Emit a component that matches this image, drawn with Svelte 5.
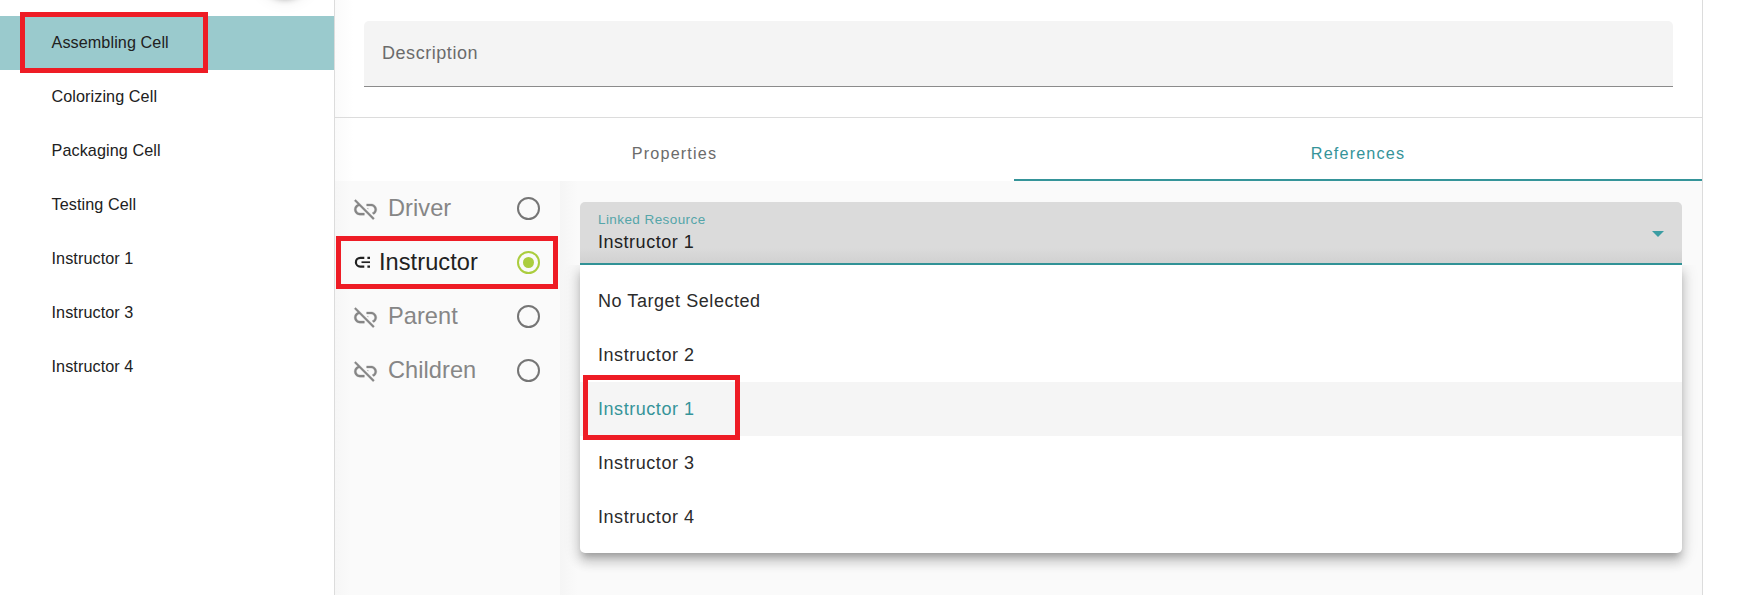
<script>
  const resources = ['Assembling Cell', 'Colorizing Cell', 'Packaging Cell', 'Testing Cell', 'Instructor 1', 'Instructor 3', 'Instructor 4'];
  const roles = ['Driver', 'Instructor', 'Parent', 'Children'];
  const options = ['No Target Selected', 'Instructor 2', 'Instructor 1', 'Instructor 3', 'Instructor 4'];
  let resource = $state('Assembling Cell');
  let role = $state('Instructor');
  let target = $state('Instructor 1');
</script>

<div class="app">
  <aside class="sidebar">
    <i class="fab"></i>
    {#each resources as r}
      <button class="cell" class:active={r === resource} onclick={() => (resource = r)}>{r}</button>
    {/each}
    <i class="mark mark-cell"></i>
  </aside>

  <main>
    <section class="head">
      <div class="description">Description</div>
    </section>
    <nav>
      <div class="tab">Properties</div>
      <div class="tab current">References</div>
    </nav>
    <div class="body">
      <div class="roles">
        {#each roles as r}
          <button class="role" class:on={r === role} onclick={() => (role = r)}>
            {#if r === role}
              <svg class="link" width="18" height="18" viewBox="0 0 18 18">
                <path d="M11.3 4.8H7.3a4.4 4.4 0 0 0 0 8.8h4M14.4 4.8H17M14.4 13.6H17" fill="none" stroke="currentColor" stroke-width="2.2" />
                <path d="M8.5 9.2H17" fill="none" stroke="currentColor" stroke-width="1.7" />
              </svg>
            {:else}
              <svg class="off" width="27" height="27" viewBox="0 0 24 24">
                <path fill="currentColor" d="M17 7h-4v1.9h4c1.71 0 3.1 1.39 3.1 3.1 0 1.43-.98 2.63-2.31 2.98l1.46 1.46C20.88 15.61 22 13.95 22 12c0-2.76-2.24-5-5-5zm-2.6 4h-.7l.7.7zM2 4.27l3.11 3.11C3.29 8.12 2 9.91 2 12c0 2.76 2.24 5 5 5h4v-1.9H7c-1.71 0-3.1-1.39-3.1-3.1 0-1.59 1.21-2.9 2.76-3.07L18.74 21 20 19.74 3.27 3 2 4.27z" stroke="currentColor" stroke-width=".25" />
              </svg>
            {/if}
            <span>{r}</span>
            <i class="radio"></i>
          </button>
        {/each}
        <i class="mark mark-role"></i>
      </div>
      <div class="content">
        <div class="select">
          <div>
            <div class="label">Linked Resource</div>
            <div class="value">{target}</div>
          </div>
          <svg width="12" height="6" viewBox="0 0 12 6"><path d="M0 0h12L6 6z" fill="#3b9da3" /></svg>
        </div>
        <div class="menu">
          {#each options as o}
            <button class="option" class:chosen={o === target} onclick={() => (target = o)}>{o}</button>
          {/each}
          <i class="mark mark-option"></i>
        </div>
      </div>
    </div>
  </main>
</div>

<style>
  :global(body) { background: #fff; overflow: hidden; }
  .app, .app * { box-sizing: border-box; }
  .app { display: flex; width: 1740px; height: 595px; overflow: hidden; font-family: "Liberation Sans", Arial, sans-serif; color: #212121; }
  button { display: flex; align-items: center; width: 100%; border: 0; background: none; font: inherit; color: inherit; text-align: left; }
  .mark { position: absolute; border: 5px solid #ee1c25; pointer-events: none; }

  .sidebar { position: relative; width: 335px; flex: none; padding-top: 16px; border-right: 1px solid #dcdcdc; }
  .fab { position: absolute; left: 261px; top: -62px; width: 48px; height: 60px; border-radius: 30px; box-shadow: 0 1px 6px rgba(0, 0, 0, .3), 0 0 18px rgba(0, 0, 0, .12); }
  .cell { height: 54px; padding: 0 51.5px 2px; font-size: 16.2px; letter-spacing: .08px; }
  .cell.active { background: #9acacd; }
  .mark-cell { left: 20px; top: 12px; width: 188px; height: 61px; }

  main { display: flex; flex-direction: column; width: 1368px; border-right: 1px solid #dcdcdc; background: linear-gradient(90deg, #fafafa, #fff 18px); }
  .head { height: 118px; flex: none; padding: 21px 29px 0; border-bottom: 1px solid #dcdcdc; }
  .description { height: 66px; padding: 0 18px; line-height: 65px; border-bottom: 1px solid #8b8b8b; border-radius: 5px 5px 0 0; background: #f4f4f4; color: #6b6b6b; font-size: 18px; letter-spacing: .55px; }
  nav { display: flex; height: 63px; flex: none; }
  .tab { flex: 0 0 679px; height: 63px; text-align: center; line-height: 70px; font-size: 16.2px; letter-spacing: 1.15px; color: #6b6b6b; }
  .tab.current { flex: 1; color: #359499; border-bottom: 2px solid #359499; }
  .body { flex: 1; display: flex; background: #fafafa; }

  .roles { position: relative; width: 225px; flex: none; background: linear-gradient(90deg, #f6f6f6, #fafafa 15px); }
  .role { height: 54px; padding: 0 20px 0 17px; font-size: 23.6px; color: #868686; }
  .role.on { color: #212121; }
  .role .off { margin-right: 9px; position: relative; top: 1px; }
  .role .link { margin: 0 8px 0 1px; }
  .role span { flex: 1; letter-spacing: .05px; }
  .radio { display: flex; align-items: center; justify-content: center; width: 23px; height: 23px; border: 2px solid #757575; border-radius: 50%; }
  .on .radio { border-color: #abcd3e; }
  .on .radio::after { content: ""; width: 11px; height: 11px; border-radius: 50%; background: #abcd3e; }
  .mark-role { left: 1px; top: 55px; width: 222px; height: 53px; }

  .content { flex: 1; padding: 21px 20px 0 20px; background: linear-gradient(90deg, #f5f5f5, #fafafa 18px); }
  .select { display: flex; justify-content: space-between; height: 63px; padding: 10px 18px 0; border-radius: 5px 5px 0 0; border-bottom: 2px solid #319296; background: linear-gradient(#dbdbdb 75%, #d1d1d1); }
  .select svg { margin-top: 19px; }
  .label { line-height: 16px; font-size: 13.5px; letter-spacing: .42px; color: #55a5a9; }
  .value { margin-top: 3px; line-height: 22px; font-size: 18px; letter-spacing: .52px; }
  .menu { position: relative; height: 288px; padding: 9px 0; border-radius: 0 0 5px 5px; background: #fff; box-shadow: 0 6px 6px -3px rgba(0, 0, 0, .2), 0 9px 11px 1px rgba(0, 0, 0, .14), 0 3px 16px 2px rgba(0, 0, 0, .12); clip-path: inset(0 -30px -40px -30px); }
  .option { height: 54px; padding: 0 18px; font-size: 18px; letter-spacing: .55px; color: #2b2b2b; }
  .option.chosen { background: #f5f5f5; color: #359499; }
  .mark-option { left: 3px; top: 110px; width: 157px; height: 65px; }
</style>
